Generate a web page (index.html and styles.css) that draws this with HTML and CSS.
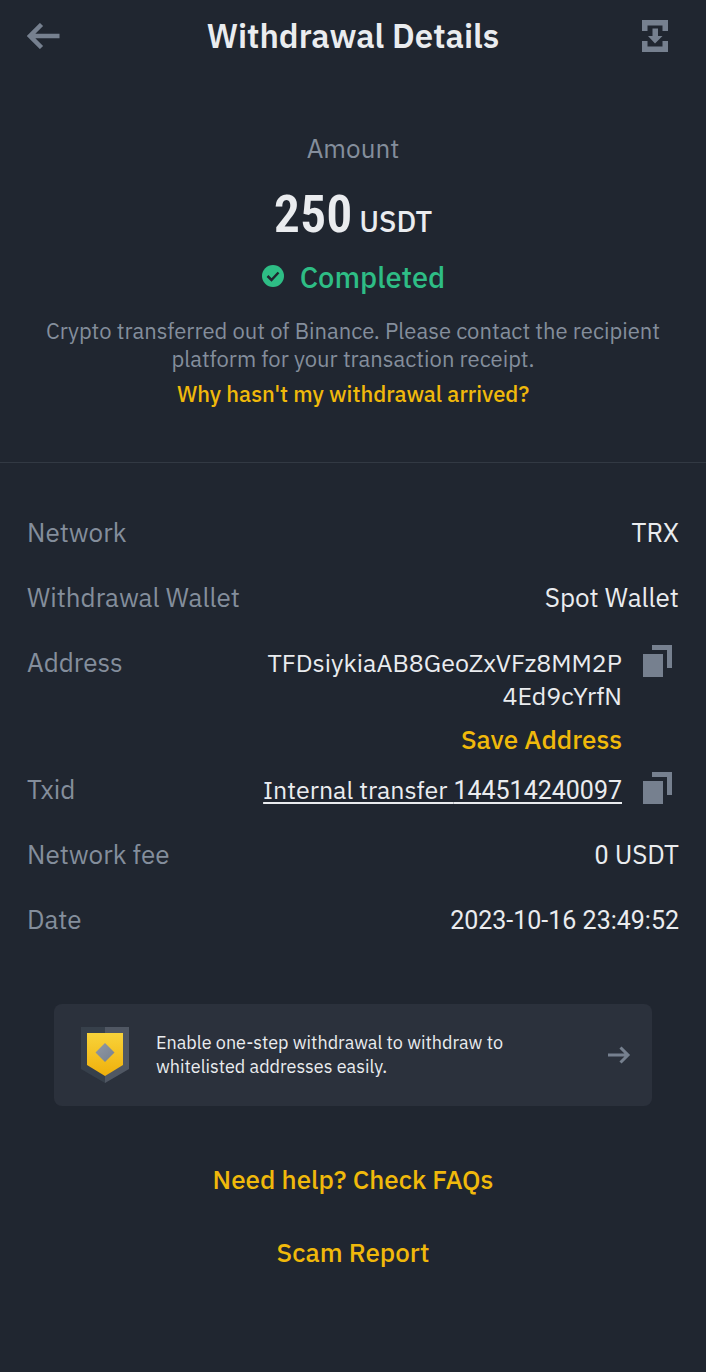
FILE: index.html
```html
<!doctype html>
<html lang="en">

<head>
    <meta charset="UTF-8" />
    <meta name="viewport" content="width=device-width, initial-scale=1.0" />
    <title>Withdrawal Details</title>
    <link rel="stylesheet" href="styles.css">
</head>

<body>
    <header class="topbar">
        <button type="button" class="icon-btn" aria-label="Back">
            <svg width="34" height="26" viewBox="0 0 34 26" fill="none" stroke="currentColor" stroke-width="4.500">
                <path d="M32.500 13H4M14.500 1.500L3 13l11.500 11.500"></path>
            </svg>
        </button>
        <h1>Withdrawal Details</h1>
        <button type="button" class="icon-btn icon-btn-end" aria-label="Save receipt">
            <svg width="28" height="34" viewBox="0 0 28 34" fill="currentColor">
                <path d="M1 1h26v11h-5.500V6.500h-15V12H1zM1 33h26V22h-5.500v5.500h-15V22H1zM11.500 9.500h5.500V17h4.500L14 24.500 7 17h4.500z"></path>
            </svg>
        </button>
    </header>

    <main>
        <section class="summary">
            <h2>Amount</h2>
            <p class="amount"><strong>250</strong> USDT</p>
            <p class="status">
                <svg width="24" height="24" viewBox="0 0 24 24">
                    <circle cx="12" cy="11" r="11" fill="#2ebd85"></circle>
                    <path d="M6.500 11l4 4 7-7.500" fill="none" stroke="#202630" stroke-width="2.500"></path>
                </svg>
                Completed
            </p>
            <p class="note">Crypto transferred out of Binance. Please contact the recipient platform for your transaction receipt.</p>
            <a href="#" class="note-link">Why hasn't my withdrawal arrived?</a>
        </section>

        <dl class="details">
            <div class="row">
                <dt>Network</dt>
                <dd>TRX</dd>
            </div>
            <div class="row">
                <dt>Withdrawal Wallet</dt>
                <dd>Spot Wallet</dd>
            </div>
            <div class="row">
                <dt>Address</dt>
                <dd class="copyable">
                    <div class="value">
                        <span>TFDsiykiaAB8GeoZxVFz8MM2P<wbr>4Ed9cYrfN</span>
                        <button type="button" class="save">Save Address</button>
                    </div>
                    <button type="button" class="copy" aria-label="Copy address">
                        <svg width="30" height="34" viewBox="0 0 30 34" fill="currentColor">
                            <path d="M0 10h20v23H0zM9 1h20v23h-5V6H9z"></path>
                        </svg>
                    </button>
                </dd>
            </div>
            <div class="row">
                <dt>Txid</dt>
                <dd class="copyable">
                    <div class="value"><a href="#" class="txid">Internal transfer <span class="num">144514240097</span></a></div>
                    <button type="button" class="copy" aria-label="Copy Txid">
                        <svg width="30" height="34" viewBox="0 0 30 34" fill="currentColor">
                            <path d="M0 10h20v23H0zM9 1h20v23h-5V6H9z"></path>
                        </svg>
                    </button>
                </dd>
            </div>
            <div class="row">
                <dt>Network fee</dt>
                <dd><span class="num">0</span> USDT</dd>
            </div>
            <div class="row">
                <dt>Date</dt>
                <dd><span class="num">2023-10-16 23:49:52</span></dd>
            </div>
        </dl>

        <a href="#" class="banner">
            <svg width="50" height="58" viewBox="0 0 50 58">
                <defs>
                    <linearGradient id="gold" x1="0" y1="0" x2="0" y2="1">
                        <stop offset="0" stop-color="#f8d33a"></stop>
                        <stop offset="1" stop-color="#f0b00b"></stop>
                    </linearGradient>
                    <linearGradient id="steel" x1="0" y1="0" x2="1" y2="1">
                        <stop offset="0" stop-color="#929aa5"></stop>
                        <stop offset="1" stop-color="#76808f"></stop>
                    </linearGradient>
                </defs>
                <path d="M1 1h24v56L1 43z" fill="#37404b"></path>
                <path d="M25 1h24v42L25 57z" fill="#505763"></path>
                <path d="M7 7h36v32L25 50 7 39z" fill="url(#gold)"></path>
                <path d="M25 17l9.500 9.500L25 36l-9.500-9.500z" fill="url(#steel)"></path>
            </svg>
            <span class="banner-text">Enable one-step withdrawal to withdraw to whitelisted addresses easily.</span>
            <svg class="banner-arrow" width="24" height="18" viewBox="0 0 24 18" fill="none" stroke="currentColor" stroke-width="3">
                <path d="M1 9h20M13.500 1.500L21 9l-7.500 7.500"></path>
            </svg>
        </a>
    </main>

    <footer class="links">
        <a href="#">Need help? Check FAQs</a>
        <a href="#">Scam Report</a>
    </footer>
</body>

</html>
```

FILE: styles.css
```css
:root {
    --bg: #202630;
    --bg-card: #2b313c;
    --line: #323943;
    --text: #eaecef;
    --text-muted: #848e9c;
    --icon: #76808f;
    --accent: #f0b90b;
    --green: #2ebd85;
}

* {
    box-sizing: border-box;
    margin: 0;
    padding: 0;
}

body {
    font-family: "IBM Plex Sans", Roboto, sans-serif;
    font-size: 26px;
    line-height: 33px;
    background-color: var(--bg);
    color: var(--text);
    min-height: 100vh;
}

a {
    color: var(--accent);
    text-decoration: none;
}

button {
    font: inherit;
    color: inherit;
    background: none;
    border: 0;
    cursor: pointer;
}

svg {
    display: block;
    flex: none;
}

.topbar {
    display: grid;
    grid-template-columns: 1fr auto 1fr;
    align-items: center;
    height: 72px;
    padding: 0 27px;
}

.topbar h1 {
    font-size: 33px;
    line-height: 40px;
    font-weight: 600;
}

.icon-btn {
    justify-self: start;
    color: var(--icon);
}

.icon-btn-end {
    justify-self: end;
    padding-right: 10px;
}

.summary {
    display: flex;
    flex-direction: column;
    align-items: center;
    text-align: center;
    padding: 60px 40px 54px;
    border-bottom: 1px solid var(--line);
}

.summary h2 {
    font-size: 26px;
    font-weight: 400;
    color: var(--text-muted);
}

.amount {
    font-size: 29px;
    line-height: 60px;
    font-weight: 500;
    margin-top: 20px;
}

.amount strong {
    font-family: "Roboto Condensed", Roboto, sans-serif;
    font-size: 52px;
    font-weight: 600;
}

.status {
    display: flex;
    align-items: center;
    gap: 15px;
    font-size: 29px;
    line-height: 36px;
    font-weight: 500;
    color: var(--green);
    margin-top: 8px;
}

.note {
    font-size: 22px;
    line-height: 28px;
    color: var(--text-muted);
    margin-top: 22px;
}

.note-link {
    font-size: 22px;
    line-height: 28px;
    font-weight: 500;
    margin-top: 7px;
}

.details {
    display: flex;
    flex-direction: column;
    gap: 32px;
    padding: 53px 27px 0;
}

.row {
    display: flex;
    justify-content: space-between;
    gap: 24px;
}

.row dt {
    color: var(--text-muted);
}

.row dd {
    text-align: right;
}

.num {
    font-family: Roboto, sans-serif;
    font-size: 25px;
    line-height: 24px;
}

.copyable {
    display: flex;
    align-items: flex-start;
    gap: 21px;
    padding-right: 6px;
}

.value {
    display: flex;
    flex-direction: column;
    align-items: flex-end;
    max-width: 372px;
    font-size: 25px;
}

.save {
    font-size: 26px;
    font-weight: 500;
    color: var(--accent);
    margin: 11px 0 -15px;
}

.copy {
    color: var(--icon);
    height: 31px;
    margin-top: -2px;
}

.txid {
    color: var(--text);
    text-decoration: underline;
    text-decoration-thickness: 2px;
    text-underline-offset: 3px;
}

.banner {
    display: flex;
    align-items: center;
    margin: 68px 54px 0;
    padding: 22px 21px 22px 26px;
    border-radius: 8px;
    background-color: var(--bg-card);
    color: var(--text);
    font-size: 18px;
    line-height: 24px;
}

.banner-text {
    flex: 1;
    padding: 0 80px 0 26px;
}

.banner-arrow {
    color: var(--icon);
}

.links {
    display: flex;
    flex-direction: column;
    align-items: center;
    gap: 40px;
    padding: 57px 27px;
    font-weight: 500;
}
```
